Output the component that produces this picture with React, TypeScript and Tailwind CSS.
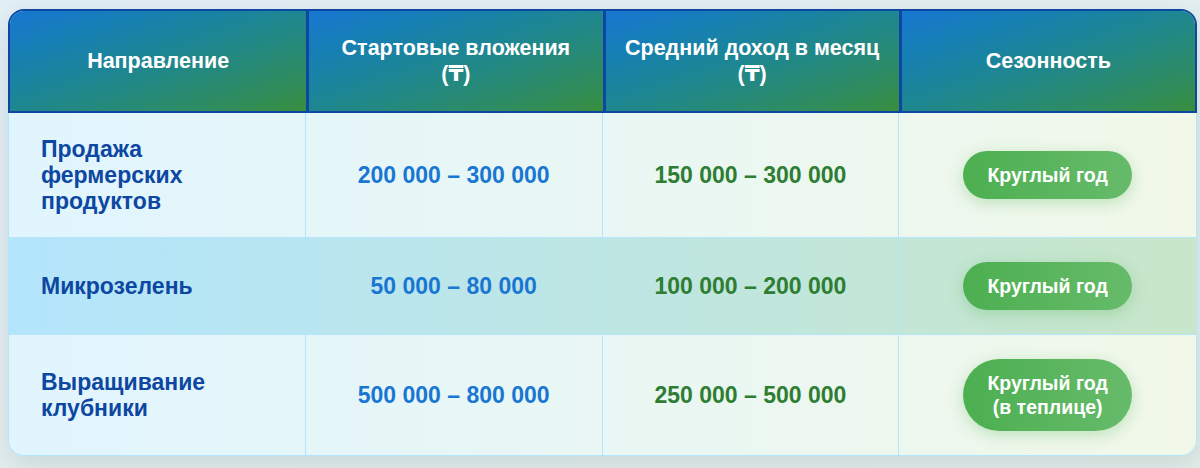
import React from "react";

type Row = {
  name: string[];
  invest: string;
  income: string;
  season: string[];
  highlight?: boolean;
};

const rows: Row[] = [
  {
    name: ["Продажа", "фермерских", "продуктов"],
    invest: "200 000 – 300 000",
    income: "150 000 – 300 000",
    season: ["Круглый год"],
  },
  {
    name: ["Микрозелень"],
    invest: "50 000 – 80 000",
    income: "100 000 – 200 000",
    season: ["Круглый год"],
    highlight: true,
  },
  {
    name: ["Выращивание", "клубники"],
    invest: "500 000 – 800 000",
    income: "250 000 – 500 000",
    season: ["Круглый год", "(в теплице)"],
  },
];

function HeaderCell({ lines, first }: { lines: string[]; first?: boolean }) {
  return (
    <div
      className={
        "min-w-0 flex items-center justify-center text-center py-[24px] px-3 bg-gradient-to-br from-[#1976d2] to-[#388e3c] text-white font-bold text-[21.5px] leading-[26px] " +
        (first ? "" : "border-l-[3px] border-[#0d47a1]")
      }
    >
      <div>
        {lines.map((l, i) => (
          <div key={i}>{l}</div>
        ))}
      </div>
    </div>
  );
}

export default function App() {
  return (
    <div
      className="w-full min-h-[468px] bg-gradient-to-br from-[#e3eff6] to-[#e4efea] pt-[9px] pl-[8px]"
      style={{ fontFamily: '"Liberation Sans", Arial, "DejaVu Sans", sans-serif' }}
    >
      <div className="w-[1189px] rounded-[16px] shadow-[0_10px_30px_rgba(0,40,60,0.12)]">
        <div className="grid grid-cols-4 rounded-t-[16px] overflow-hidden border-2 border-[#0d47a1]">
          <HeaderCell lines={["Направление"]} first />
          <HeaderCell lines={["Стартовые вложения", "(₸)"]} />
          <HeaderCell lines={["Средний доход в месяц", "(₸)"]} />
          <HeaderCell lines={["Сезонность"]} />
        </div>
        <div className="rounded-b-[16px] overflow-hidden border-x border-b border-[#b3e5fc]">
          {rows.map((r, i) => (
            <div
              key={i}
              className={
                "grid grid-cols-4 " +
                (i < rows.length - 1 ? "border-b border-[#b3e5fc] " : "") +
                (r.highlight
                  ? "bg-gradient-to-r from-[#b3e5fc] to-[#c8e6c9]"
                  : "bg-gradient-to-r from-[#e1f5fe] to-[#f1f8e9]")
              }
            >
              <div className="min-w-0 flex items-center pl-[32px] pr-4 py-[23px] border-r border-[#b3e5fc] text-[#0d47a1] font-bold text-[23px] leading-[26px]">
                <div>
                  {r.name.map((l, j) => (
                    <div key={j}>{l}</div>
                  ))}
                </div>
              </div>
              <div className="min-w-0 flex items-center justify-center py-[23px] border-r border-[#b3e5fc] text-[#1976d2] font-bold text-[23px] leading-[26px]">
                {r.invest}
              </div>
              <div className="min-w-0 flex items-center justify-center py-[23px] border-r border-[#b3e5fc] text-[#2e7d32] font-bold text-[23px] leading-[26px]">
                {r.income}
              </div>
              <div className="min-w-0 flex items-center justify-center py-[24px]">
                <div className="rounded-full bg-gradient-to-r from-[#4caf50] to-[#66bb6a] text-white font-bold text-[19.5px] leading-[24px] px-[24px] py-[12px] text-center shadow-[0_4px_15px_rgba(76,175,80,0.3)]">
                  {r.season.map((l, j) => (
                    <div key={j}>{l}</div>
                  ))}
                </div>
              </div>
            </div>
          ))}
        </div>
      </div>
    </div>
  );
}
